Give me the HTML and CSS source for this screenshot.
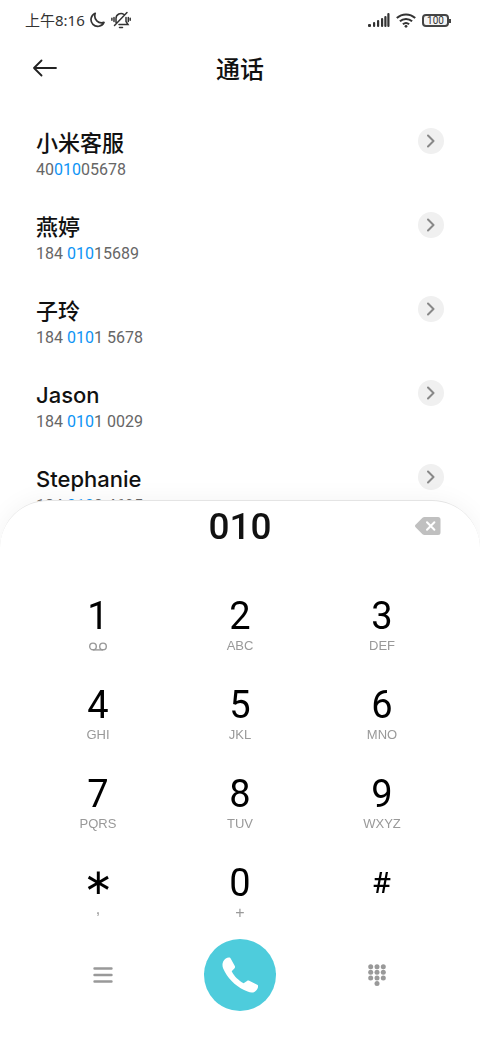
FILE: index.html
```html
<!DOCTYPE html>
<html lang="zh-CN">
<head>
<meta charset="utf-8">
<meta name="viewport" content="width=device-width, initial-scale=1">
<title>通话</title>
<link rel="stylesheet" href="styles.css">
</head>
<body>
<div class="status">
  <div class="status-side">
    <span class="clock">上午8:16</span>
    <svg class="moon" width="16" height="16" viewBox="0 0 16 16" fill="none" stroke="#333" stroke-width="1.700" stroke-linejoin="round"><path d="M6.200 1.300A6.800 6.800 0 1 0 15 10.400C9.500 12.200 4.200 7.500 6.200 1.300Z"/></svg>
    <svg class="bell" width="20" height="18" viewBox="0 0 20 18" fill="none" stroke="#333" stroke-width="1.500" stroke-linecap="round"><path d="M5 11.500V7.500a5 5 0 0 1 8-4M15 6.500v4l2 3H8M8.500 16.500h3M3.500 14.500L16 1.500M3 6.500v4M.9 7.300v2M17.300 6.500v4M19.200 7.300v2"/></svg>
  </div>
  <div class="status-side">
    <svg width="22" height="14" viewBox="0 0 22 14" fill="#333"><rect x="0" y="11" width="3" height="3" rx="1"/><rect x="5" y="9" width="2.200" height="5" rx="1"/><rect x="9" y="7" width="2.200" height="7" rx="1"/><rect x="13" y="5" width="2.200" height="9" rx="1"/><rect x="16.300" y="3" width="2.200" height="11" rx="1"/><rect x="19.300" y="0" width="2.200" height="14" rx="1"/></svg>
    <svg width="20" height="15" viewBox="0 0 20 15" fill="none" stroke="#333" stroke-width="2"><path d="M.8 5a13.500 13.500 0 0 1 18.400 0M3.900 8.300a9 9 0 0 1 12.200 0M6.900 11.300a4.700 4.700 0 0 1 6.200 0"/><circle cx="10" cy="13.300" r="1.400" fill="#333" stroke="none"/></svg>
    <span class="battery">100</span>
  </div>
</div>
<header class="header">
  <button class="back" aria-label="返回"><svg width="24" height="18" viewBox="0 0 24 18" fill="none" stroke="#222" stroke-width="1.800" stroke-linecap="round" stroke-linejoin="round"><path d="M23 9H1M8.500 1.500L1 9l7.500 7.500"/></svg></button>
  <h1 class="title">通话</h1>
</header>
<main>
  <ul class="contacts">
    <li class="contact"><div><div class="name">小米客服</div><div class="number">40<b class="hit">010</b>05678</div></div><button class="more" aria-label="详情"><svg width="8" height="14" viewBox="0 0 8 14"><path d="M1 1.500L6.500 7L1 12.500"/></svg></button></li>
    <li class="contact"><div><div class="name">燕婷</div><div class="number">184 <b class="hit">010</b>15689</div></div><button class="more" aria-label="详情"><svg width="8" height="14" viewBox="0 0 8 14"><path d="M1 1.500L6.500 7L1 12.500"/></svg></button></li>
    <li class="contact"><div><div class="name">子玲</div><div class="number">184 <b class="hit">010</b>1 5678</div></div><button class="more" aria-label="详情"><svg width="8" height="14" viewBox="0 0 8 14"><path d="M1 1.500L6.500 7L1 12.500"/></svg></button></li>
    <li class="contact"><div><div class="name">Jason</div><div class="number">184 <b class="hit">010</b>1 0029</div></div><button class="more" aria-label="详情"><svg width="8" height="14" viewBox="0 0 8 14"><path d="M1 1.500L6.500 7L1 12.500"/></svg></button></li>
    <li class="contact"><div><div class="name">Stephanie</div><div class="number">184 <b class="hit">010</b>0 4695</div></div><button class="more" aria-label="详情"><svg width="8" height="14" viewBox="0 0 8 14"><path d="M1 1.500L6.500 7L1 12.500"/></svg></button></li>
  </ul>
</main>
<section class="dialer" aria-label="拨号盘">
  <div class="entry">
    <output class="typed">010</output>
    <button class="erase" aria-label="删除"><svg width="26" height="18" viewBox="0 0 26 18"><path d="M9.500 0H23a2.500 2.500 0 0 1 2.500 2.500v13A2.500 2.500 0 0 1 23 18H9.500a3 3 0 0 1-2-.8L.8 10.500a2 2 0 0 1 0-3L7.500.8a3 3 0 0 1 2-.8Z" fill="#c0c0c0"/><path d="M12 5.200l7.400 7.600M19.400 5.200L12 12.800" stroke="#fff" stroke-width="2" stroke-linecap="round"/></svg></button>
  </div>
  <div class="keys">
    <button class="key"><span class="digit">1</span><span class="letters"><svg width="18" height="9" viewBox="0 0 18 9" fill="none" stroke="#999" stroke-width="1.400"><circle cx="4" cy="4.400" r="3.300"/><circle cx="14" cy="4.400" r="3.300"/><path d="M4 7.900h10"/></svg></span></button>
    <button class="key"><span class="digit">2</span><span class="letters">ABC</span></button>
    <button class="key"><span class="digit">3</span><span class="letters">DEF</span></button>
    <button class="key"><span class="digit">4</span><span class="letters">GHI</span></button>
    <button class="key"><span class="digit">5</span><span class="letters">JKL</span></button>
    <button class="key"><span class="digit">6</span><span class="letters">MNO</span></button>
    <button class="key"><span class="digit">7</span><span class="letters">PQRS</span></button>
    <button class="key"><span class="digit">8</span><span class="letters">TUV</span></button>
    <button class="key"><span class="digit">9</span><span class="letters">WXYZ</span></button>
    <button class="key"><span class="digit star">∗</span><span class="letters comma">,</span></button>
    <button class="key"><span class="digit">0</span><span class="letters plus">+</span></button>
    <button class="key"><span class="digit hash">#</span><span class="letters"></span></button>
  </div>
  <div class="actions">
    <button aria-label="菜单"><svg width="20" height="18" viewBox="0 0 20 18" stroke="#999" stroke-width="2.400" stroke-linecap="round"><path d="M1.500 2.500h17M1.500 9h17M1.500 15.500h17"/></svg></button>
    <button class="call" aria-label="拨打"><svg width="36" height="36" viewBox="0 0 36 36" fill="#fff"><path d="M1.300 4.200C2.600 1.900 4.800 .7 6.800 .5c1-.1 1.600.4 2 1.200l4 7.300c.4.800.4 1.500-.2 2.200L9.700 14.300C11.500 18.500 16.500 23.500 21.600 26.200L25 23.900c.7-.5 1.400-.6 2.200-.2l8 4.100c.9.500 1.200 1.200.9 2.200-.6 2-1.800 4-3.700 5-1.700.9-4.400.7-6.800-.4C14.700 30.500 5.500 21.500 1.200 11.500.2 9 .2 6.200 1.300 4.200Z"/></svg></button>
    <button aria-label="收起键盘"><svg width="18" height="22" viewBox="0 0 18 22" fill="#999"><circle cx="2.700" cy="2.700" r="2.500"/><circle cx="9" cy="2.700" r="2.500"/><circle cx="15.300" cy="2.700" r="2.500"/><circle cx="2.700" cy="8.300" r="2.500"/><circle cx="9" cy="8.300" r="2.500"/><circle cx="15.300" cy="8.300" r="2.500"/><circle cx="2.700" cy="14" r="2.500"/><circle cx="9" cy="14" r="2.500"/><circle cx="15.300" cy="14" r="2.500"/><circle cx="9" cy="19.500" r="2.500"/></svg></button>
  </div>
</section>
</body>
</html>
```
FILE: styles.css
```css
* { box-sizing: border-box; }
body {
  margin: 0;
  background: #fff;
  color: #111;
  font-family: "Noto Sans", "Noto Sans CJK SC", sans-serif;
}
button {
  display: flex;
  align-items: center;
  justify-content: center;
  margin: 0;
  padding: 0;
  border: 0;
  background: none;
  color: inherit;
  font: inherit;
}
svg { display: block; flex: none; }
.status {
  display: flex;
  align-items: center;
  justify-content: space-between;
  height: 40px;
  padding: 0 31px 0 25px;
}
.status-side { display: flex; align-items: center; gap: 6px; }
.clock { margin-right: -2px; color: #333; font-size: 15px; line-height: 20px; }
.battery {
  position: relative;
  width: 27px;
  height: 13px;
  border: 2px solid #444;
  border-radius: 4px;
  background: #f4f4f4;
  color: #333;
  font: 400 10px/9px Roboto, sans-serif;
  text-align: center;
}
.battery::after {
  content: "";
  position: absolute;
  top: 3px;
  right: -4px;
  width: 2px;
  height: 4px;
  background: #444;
}
.header {
  display: grid;
  grid-template-columns: 24px 1fr 24px;
  align-items: center;
  height: 56px;
  padding: 0 33px;
}
.title {
  margin: 0;
  font: 500 24px/34px "Noto Sans CJK SC", sans-serif;
  text-align: center;
}
.contacts { margin: 0; padding: 16px 36px 0; list-style: none; }
.contact {
  display: flex;
  align-items: flex-start;
  justify-content: space-between;
  height: 84px;
  padding-top: 16px;
}
.name { font-family: Inter, "Noto Sans CJK SC", sans-serif; font-size: 22px; font-weight: 500; line-height: 30px; }
.number { color: #666; font: 400 16px/24px Roboto, sans-serif; }
.hit { color: #0d94f5; font-weight: 400; }
.more { width: 26px; height: 26px; border-radius: 50%; background: #f0f0f0; }
.more path { fill: none; stroke: #888; stroke-width: 2; stroke-linecap: round; stroke-linejoin: round; }
.dialer {
  position: fixed;
  right: 0;
  bottom: 0;
  left: 0;
  padding-bottom: 29px;
  border-top: 1px solid #e4e4e4;
  border-radius: 48px 48px 0 0;
  background: #fff;
  box-shadow: 0 0 24px rgba(0, 0, 0, 0.05);
}
.entry {
  display: grid;
  grid-template-columns: 26px 1fr 26px;
  align-items: center;
  height: 50px;
  padding: 0 39px;
}
.typed {
  grid-column: 2;
  font: 500 37px/48px Roboto, sans-serif;
  padding-top: 2px;
  text-align: center;
}
.keys {
  display: grid;
  grid-template-columns: repeat(3, 1fr);
  row-gap: 29px;
  padding: 45px 27px 0;
}
.key { flex-direction: column; height: 60px; }
.digit { height: 40px; color: #000; font: 400 38px/40px Roboto, sans-serif; }
.star { font: 400 36px/38px "DejaVu Sans", sans-serif; }
.hash { font: 500 28px/38px "Noto Sans", sans-serif; }
.letters {
  display: flex;
  align-items: center;
  height: 20px;
  color: #999;
  font: 13px/20px "Liberation Sans", sans-serif;
}
.comma { font-size: 16px; line-height: 12px; align-items: flex-start; }
.plus { font-size: 16px; }
.actions {
  display: grid;
  grid-template-columns: repeat(3, 1fr);
  place-items: center;
  padding: 16px 34px 0;
}
.call { width: 72px; height: 72px; border-radius: 50%; background: #4eccdc; }
```
